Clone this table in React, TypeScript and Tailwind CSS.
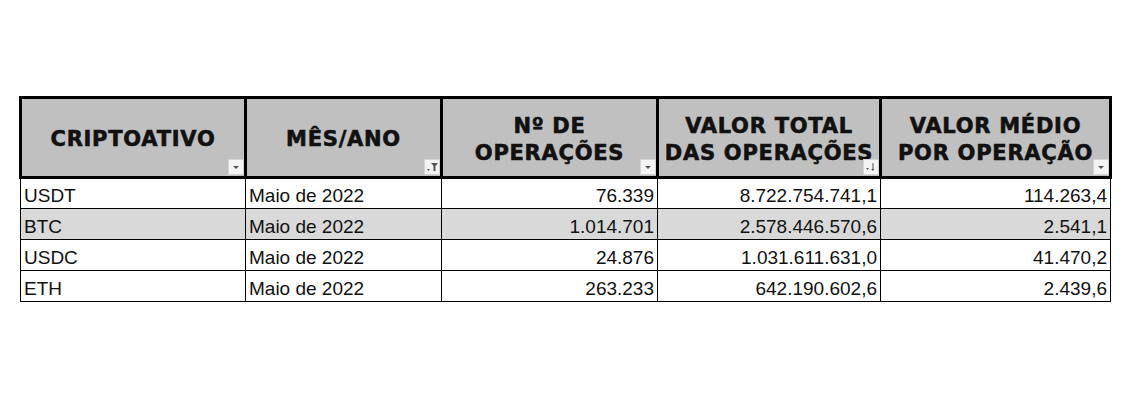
import React from 'react';

type Row = { asset: string; month: string; ops: string; total: string; avg: string };

const rows: Row[] = [
  { asset: 'USDT', month: 'Maio de 2022', ops: '76.339', total: '8.722.754.741,1', avg: '114.263,4' },
  { asset: 'BTC', month: 'Maio de 2022', ops: '1.014.701', total: '2.578.446.570,6', avg: '2.541,1' },
  { asset: 'USDC', month: 'Maio de 2022', ops: '24.876', total: '1.031.611.631,0', avg: '41.470,2' },
  { asset: 'ETH', month: 'Maio de 2022', ops: '263.233', total: '642.190.602,6', avg: '2.439,6' },
];

function DropButton({ kind }: { kind: 'plain' | 'filter' | 'sort' }) {
  return (
    <div className="absolute right-0 bottom-[1px] flex h-4 w-4 items-center justify-center border border-[#d4d4d4] bg-[#f4f4f4]">
      <svg width="14" height="14" viewBox="0 0 14 14">
        {kind === 'plain' && <path d="M4 6h6l-3 3z" fill="#555" />}
        {kind === 'filter' && (
          <g fill="#555">
            <path d="M6 3h7l-2.5 3v5h-2V6z" />
            <path d="M2 9h3l-1.5 2z" />
          </g>
        )}
        {kind === 'sort' && (
          <g fill="#555">
            <path d="M2 8h3l-1.5 2z" />
            <rect x="8.5" y="3" width="1" height="7" />
            <path d="M7 9h3.5l-1.75 2z" />
          </g>
        )}
      </svg>
    </div>
  );
}

function HeadCell({ lines, kind, width }: { lines: string[]; kind: 'plain' | 'filter' | 'sort'; width: string }) {
  return (
    <th className={`relative h-[80px] border-[3px] border-black bg-[#c0c0c0] p-0 pt-[4px] align-middle ${width}`}>
      <div className="flex flex-col items-center text-[21px] font-bold leading-[27px] tracking-[0.035em] text-[#111] whitespace-nowrap [-webkit-text-stroke:0.6px_#111]">
        {lines.map((l) => (
          <span key={l}>{l}</span>
        ))}
      </div>
      <DropButton kind={kind} />
    </th>
  );
}

export default function App() {
  return (
    <div className="h-[400px] w-[1125px] bg-white pl-[19px] pt-[96px]">
      <table
        className="w-[1090px] table-fixed border-collapse"
        style={{ fontFamily: '"DejaVu Sans", Verdana, sans-serif' }}
      >
        <thead>
          <tr>
            <HeadCell lines={['CRIPTOATIVO']} kind="plain" width="w-[225px]" />
            <HeadCell lines={['MÊS/ANO']} kind="filter" width="w-[196px]" />
            <HeadCell lines={['Nº DE', 'OPERAÇÕES']} kind="plain" width="w-[216px]" />
            <HeadCell lines={['VALOR TOTAL', 'DAS OPERAÇÕES']} kind="sort" width="w-[223px]" />
            <HeadCell lines={['VALOR MÉDIO', 'POR OPERAÇÃO']} kind="plain" width="w-[230px]" />
          </tr>
        </thead>
        <tbody className="text-[19px] text-[#111]" style={{ fontFamily: '"Liberation Sans", Arial, sans-serif' }}>
          {rows.map((r, i) => (
            <tr key={r.asset} className={`h-[31px] ${i === 1 ? 'bg-[#d9d9d9]' : 'bg-white'}`}>
              <td className="border border-black px-[3px] pt-[4px] pb-0 text-left leading-none">{r.asset}</td>
              <td className="border border-black px-[3px] pt-[4px] pb-0 text-left leading-none">{r.month}</td>
              <td className="border border-black px-[3px] pt-[4px] pb-0 text-right leading-none">{r.ops}</td>
              <td className="border border-black px-[3px] pt-[4px] pb-0 text-right leading-none">{r.total}</td>
              <td className="border border-black px-[3px] pt-[4px] pb-0 text-right leading-none">{r.avg}</td>
            </tr>
          ))}
        </tbody>
      </table>
    </div>
  );
}
